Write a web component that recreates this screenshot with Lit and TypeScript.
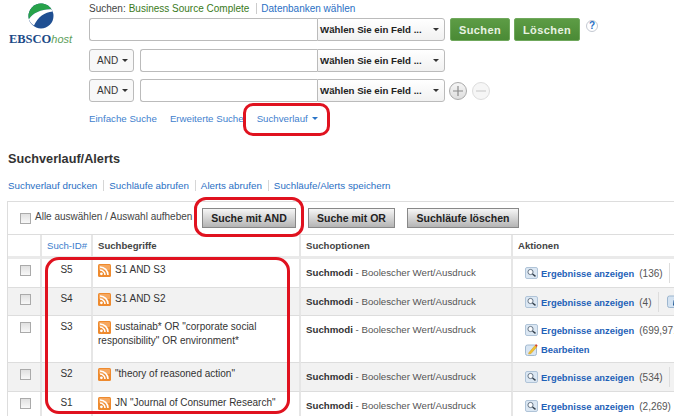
import { LitElement, html, css, svg } from "lit";
import { customElement } from "lit/decorators.js";

const rss = html`<svg class="rss" width="13" height="13" viewBox="0 0 13 13"><rect width="13" height="13" rx="1.5" fill="#ee8a2e"/><rect x="1" y="1" width="11" height="5" rx="1" fill="#f6a860"/><circle cx="3.4" cy="9.8" r="1.4" fill="#fff"/><path d="M2 6a5 5 0 0 1 5 5M2 3a8 8 0 0 1 8 8" fill="none" stroke="#fff" stroke-width="1.6"/></svg>`;
const mag = html`<svg class="ic" width="13" height="12" viewBox="0 0 13 12"><rect x=".5" y=".5" width="12" height="11" rx="1.5" fill="#dbe7f3" stroke="#b0c4d8"/><circle cx="5.500" cy="5" r="2.600" fill="#fbfcfe" stroke="#5a6a7a" stroke-width=".9"/><path d="M7.500 7l3 2.400" stroke="#333f4b" stroke-width="1.400"/></svg>`;
const edit = html`<svg class="ic" width="13" height="13" viewBox="0 0 13 13"><rect x=".5" y="2" width="11" height="10.500" rx="2" fill="#d8e5f2" stroke="#a3bad0"/><path d="M4 9.500L10 2.500l1.800 1.400L6 10.600 3.600 11z" fill="#f2c230" stroke="#d09a20" stroke-width=".5"/><path d="M10 2.500l1-1.400 1.600 1.300-.8 1.500z" fill="#d8452c"/></svg>`;
const info = html`<svg width="13" height="13" viewBox="0 0 13 13"><rect x=".5" y="1" width="12" height="11.500" rx="2" fill="#d3e2f1" stroke="#9db6cf"/><path d="M7.200 2.400h1.800l-.3 1.600H6.900zM6.600 5.200h2l-1 5.200H6z" fill="#17518f"/></svg>`;
const plus = html`<svg width="12" height="12" viewBox="0 0 12 12"><path d="M6 1v10M1 6h10" stroke="#8a8a8a" stroke-width="1.200"/></svg>`;
const minus = html`<svg width="12" height="12" viewBox="0 0 12 12"><path d="M1 6h10" stroke="#cfcfcf" stroke-width="1.200"/></svg>`;

const rows = [
  { id: "S5", term: "S1 AND S3", count: "(136)", h: 29, shade: false, sep: true },
  { id: "S4", term: "S1 AND S2", count: "(4)", h: 28, shade: true, sep: true, info: true },
  { id: "S3", term: "sustainab* OR \"corporate social responsibility\" OR environment*", count: "(699,971)", h: 47, shade: false, sep: false, edit: true },
  { id: "S2", term: "\"theory of reasoned action\"", count: "(534)", h: 29, shade: true, sep: true },
  { id: "S1", term: "JN \"Journal of Consumer Research\"", count: "(2,269)", h: 29, shade: false, sep: false },
];

@customElement("app-root")
export class AppRoot extends LitElement {
  static styles = css`
    :host { display: block; position: relative; width: 674px; height: 416px; overflow: hidden; background: #fff; font-family: "Liberation Sans", Arial, sans-serif; font-size: 10px; color: #333; }
    a { color: #2a6fc4; text-decoration: none; }
    .top { display: flex; height: 143px; }
    .logo { width: 89px; flex: none; display: flex; flex-direction: column; align-items: center; padding-top: 3px; box-sizing: border-box; padding-right: 8px; }
    .wordmark { margin-top: 4px; white-space: nowrap; line-height: 12px; }
    .ebsco { font-family: "Liberation Serif", serif; font-weight: 700; font-size: 12.5px; color: #1c4a87; }
    .host { font-style: italic; font-size: 11px; color: #5c9e5a; }
    .form { flex: 1; padding-top: 3px; display: flex; flex-direction: column; }
    .sline { height: 15px; padding-bottom: 4px; box-sizing: border-box; display: flex; align-items: center; color: #444; white-space: nowrap; }
    .db { color: #3a7a20; margin-left: 3px; }
    .vsep { width: 1px; height: 11px; background: #ccc; margin: 0 4px 0 7px; }
    .row { display: flex; align-items: flex-start; }
    .r1 { height: 23px; }
    .r2 { height: 23px; margin-top: 8px; }
    .r3 { height: 23px; margin-top: 7px; }
    .op { width: 45px; height: 100%; box-sizing: border-box; border: 1px solid #bbb; border-radius: 3px; margin-right: 6px; display: flex; align-items: center; justify-content: space-between; padding: 0 5px 0 7px; font-size: 10px; background: #f8f8f8; color: #333; }
    .caret { width: 0; height: 0; border-left: 3px solid transparent; border-right: 3px solid transparent; border-top: 3px solid #333; }
    .input { flex: none; height: 100%; box-sizing: border-box; border: 1px solid #bbb; border-right: 0; border-radius: 3px 0 0 3px; background: #fff; }
    .field { width: 128px; height: 100%; box-sizing: border-box; border: 1px solid #bbb; border-radius: 0 3px 3px 0; background: linear-gradient(#fff, #f1f1f1); display: flex; align-items: center; justify-content: space-between; padding: 0 5px 0 2px; font-weight: 700; font-size: 9.7px; color: #222; white-space: nowrap; }
    .gbtn { height: 23px; box-sizing: border-box; background: linear-gradient(#5d9c45, #4a8a35); border: 1px solid #6fa85c; border-radius: 2px; color: #e8f2e2; font-weight: 700; font-size: 11px; letter-spacing: .4px; display: flex; align-items: center; justify-content: center; }
    .help { width: 12px; height: 12px; box-sizing: border-box; border: 1px solid #c4c9d2; border-radius: 50%; margin: 2px 0 0 6px; font-size: 10px; font-weight: 700; line-height: 10px; text-align: center; color: #2a6fc4; }
    .circ { width: 18px; height: 18px; box-sizing: border-box; border-radius: 50%; border: 1px solid #aaa; background: linear-gradient(#f6f6f6, #dedede); margin-top: 3px; display: flex; align-items: center; justify-content: center; }
    .circ.off { border-color: #ddd; background: #f6f6f6; margin-left: 5px; }
    .circ.on { margin-left: 4px; }
    .tabs { display: flex; margin-top: 11px; line-height: 12px; font-size: 9.7px; }
    .tabs a { color: #3f7fce; white-space: nowrap; }
    .tabs .tri { display: inline-block; width: 0; height: 0; border-left: 3px solid transparent; border-right: 3px solid transparent; border-top: 3px solid #2a74c8; margin-left: 4px; vertical-align: 2px; }
    h2 { margin: 8px 0 0 8px; font-size: 12.700px; line-height: 16px; font-weight: 700; color: #333; }
    .links { display: flex; align-items: center; margin: 12px 0 0 8px; height: 12px; font-size: 9.800px; white-space: nowrap; }
    .links i { width: 1px; height: 11px; background: #d6d6d6; margin: 0 5px 0 6px; }
    .panel { margin: 10px 0 0 7px; width: 800px; border-top: 1px solid #ddd; border-left: 1px solid #ddd; }
    .bar { display: flex; align-items: center; height: 33px; box-sizing: border-box; padding-left: 12px; color: #444; border-bottom: 1px solid #ddd; }
    .cb { flex: none; width: 11px; height: 11px; border: 1px solid #aaa; background: linear-gradient(#e0e0e0, #f8f8f8); box-sizing: border-box; }
    .bar .cb { margin: 0 4px 0 0; }
    .bar span { flex: none; width: 167px; white-space: nowrap; font-size: 10px; position: relative; top: -2px; }
    .gray { flex: none; height: 20px; box-sizing: border-box; border: 1px solid #888; background: linear-gradient(#f6f6f6, #b4b4b4); font-weight: 700; font-size: 10.500px; color: #222; display: flex; align-items: center; justify-content: center; margin-right: 12px; white-space: nowrap; }
    table { border-collapse: separate; border-spacing: 0; table-layout: fixed; width: 793px; font-size: 10px; }
    th, td { padding: 0; vertical-align: top; box-sizing: border-box; border-right: 2px solid #e6e6e6; }
    th { height: 24px; font-weight: 700; text-align: left; vertical-align: middle; padding-left: 5px; color: #444; border-bottom: 3px solid #eaeaea; font-size: 9.6px; }
    th a { font-weight: 400; color: #3a7ccc; }
    tr.shade td { background: #f2f2f2; }
    td { border-bottom: 1px solid #ddd; }
    td.c { text-align: center; }
    td.ck { padding: 6px 0 0 12px; }
    td.id { padding-top: 5px; line-height: 12px; font-size: 10px; }
    td.term { padding: 4px 4px 0 5px; line-height: 13.500px; font-size: 10px; }
    .rss { vertical-align: -4px; margin-right: 4px; }
    td.opt { padding: 8px 0 0 5px; line-height: 12px; white-space: nowrap; color: #555; font-size: 9.700px; }
    td.opt b { color: #333; }
    .act { display: flex; align-items: center; height: 20px; margin: 4px 0 0 12px; white-space: nowrap; }
    .act .ic { margin-right: 3px; }
    .act a { color: #1f62b8; font-weight: 700; font-size: 9.400px; }
    .act em { font-style: normal; color: #555; margin-left: 5px; font-size: 10px; }
    .act i { width: 1px; height: 20px; background: #ddd; margin-left: 6px; }
    .act .inf { margin-left: 8px; display: block; }
    .act.second { margin-top: -1px; }
    .mark { position: absolute; box-sizing: border-box; border: 3px solid #e0121f; border-radius: 10px; pointer-events: none; }
    .m1 { left: 243px; top: 103px; width: 87px; height: 33px; }
    .m2 { left: 194px; top: 197px; width: 110px; height: 40px; border-radius: 12px; }
    .m3 { left: 45px; top: 257px; width: 245px; height: 157px; border-radius: 14px; }
  `;

  logo() {
    return html`<svg width="26" height="26" viewBox="0 0 26 26">
      <circle cx="13" cy="13" r="12.500" fill="#1f4f92"/>
      ${svg`<path d="M.5 13A12.500 12.500 0 0 1 13 .5c4.500 0 8.400 2.300 10.600 5.900C14 6 5 10 .9 16.200.6 15.200.5 14.100.5 13z" fill="#27a24a"/>
      <path d="M.9 16.200C5 10 14 6 23.600 6.400c.4.7.7 1.300 1 2C17 9 9.500 14 6 22.600 3.500 21 1.700 18.800.9 16.200z" fill="#fff"/>`}
    </svg>`;
  }

  row(r: any) {
    return html`<tr class=${r.shade ? "shade" : ""} style="height:${r.h}px">
      <td class="ck"><div class="cb"></div></td>
      <td class="id c">${r.id}</td>
      <td class="term">${rss}${r.term}</td>
      <td class="opt"><b>Suchmodi</b> - Boolescher Wert/Ausdruck</td>
      <td>
        <div class="act">${mag}<a href="#">Ergebnisse anzeigen</a><em>${r.count}</em>${r.sep ? html`<i></i>` : ""}${r.info ? html`<span class="inf">${info}</span>` : ""}</div>
        ${r.edit ? html`<div class="act second">${edit}<a href="#">Bearbeiten</a></div>` : ""}
      </td>
    </tr>`;
  }

  render() {
    const field = html`<div class="field">Wählen Sie ein Feld ...<span class="caret"></span></div>`;
    const op = html`<div class="op">AND<span class="caret"></span></div>`;
    return html`
      <div class="top">
        <div class="logo">${this.logo()}<div class="wordmark"><span class="ebsco">EBSCO</span><span class="host">host</span></div></div>
        <div class="form">
          <div class="sline">Suchen:<span class="db">Business Source Complete</span><span class="vsep"></span><a href="#">Datenbanken wählen</a></div>
          <div class="row r1">
            <div class="input" style="width:228px"></div>${field}
            <div class="gbtn" style="width:60px;margin-left:5px">Suchen</div>
            <div class="gbtn" style="width:66px;margin-left:4px">Löschen</div>
            <div class="help">?</div>
          </div>
          <div class="row r2">${op}<div class="input" style="width:177px"></div>${field}</div>
          <div class="row r3">${op}<div class="input" style="width:177px"></div>${field}
            <div class="circ on">${plus}</div><div class="circ off">${minus}</div></div>
          <div class="tabs"><a href="#">Einfache Suche</a><a href="#" style="margin-left:13px">Erweiterte Suche</a><a href="#" style="margin-left:13px">Suchverlauf<span class="tri"></span></a></div>
        </div>
      </div>
      <h2>Suchverlauf/Alerts</h2>
      <div class="links"><a href="#">Suchverlauf drucken</a><i></i><a href="#">Suchläufe abrufen</a><i></i><a href="#">Alerts abrufen</a><i></i><a href="#">Suchläufe/Alerts speichern</a></div>
      <div class="panel">
        <div class="bar"><div class="cb"></div><span>Alle auswählen / Auswahl aufheben</span>
          <div class="gray" style="width:94px">Suche mit AND</div>
          <div class="gray" style="width:87px">Suche mit OR</div>
          <div class="gray" style="width:112px">Suchläufe löschen</div>
        </div>
        <table>
          <colgroup><col style="width:34px"><col style="width:51px"><col style="width:208px"><col style="width:212px"><col></colgroup>
          <thead><tr><th></th><th><a href="#">Such-ID#</a></th><th>Suchbegriffe</th><th>Suchoptionen</th><th style="border-right:0">Aktionen</th></tr></thead>
          <tbody>${rows.map((r) => this.row(r))}</tbody>
        </table>
      </div>
      <div class="mark m1"></div><div class="mark m2"></div><div class="mark m3"></div>
    `;
  }
}
